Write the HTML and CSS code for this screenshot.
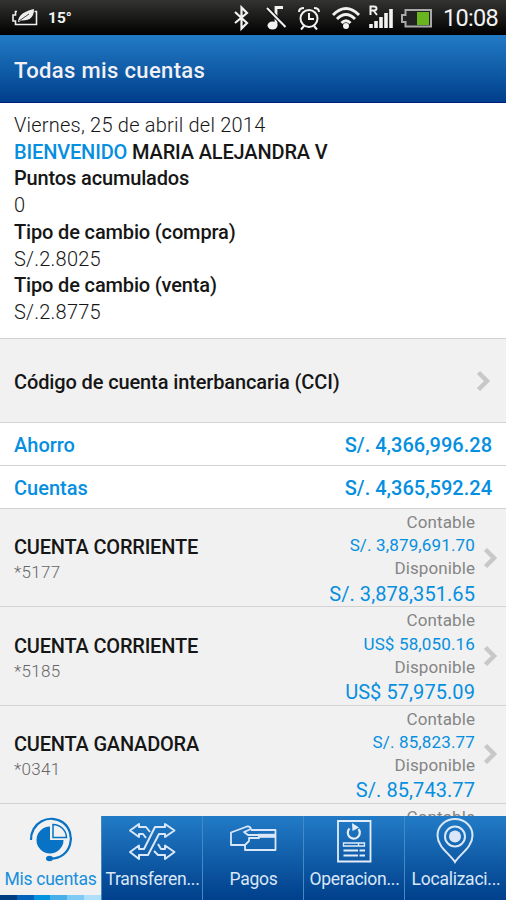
FILE: index.html
```html
<!DOCTYPE html>
<html lang="es">
  <head>
    <meta charset="UTF-8" />
    <meta name="viewport" content="width=device-width, initial-scale=1.0" />
    <title>Todas mis cuentas</title>
    <link rel="stylesheet" href="styles.css">
  </head>
  <body>
    <div class="status-bar">
      <div class="status-left">
        <svg width="26" height="18" viewBox="0 0 26 18">
          <path d="M5 2.500H3.500V6H1V12H3.500V15.500H24.500V2.500H22.500" fill="none" stroke="#eee" stroke-width="1.600" />
          <path d="M6 13C6 5 14 2 22 0C22 8 18 12 9 11.500Q7.500 13 6 13Z" fill="#eee" />
          <path d="M7 12L17 5" stroke="#333" stroke-width="0.900" />
        </svg>
        <span class="temperature">15°</span>
      </div>
      <svg class="status-icons" width="204" height="35" viewBox="0 0 204 35" fill="none" stroke="#f2f2f2">
        <!-- bluetooth -->
        <path d="M2 12L14 23L8.500 28.500V7.500L14 13L2 23" stroke-width="2.200" />
        <!-- silent -->
        <path d="M43 25V7.500H50" stroke-width="2.800" />
        <path d="M34 8L52.500 27" stroke="#111" stroke-width="4" />
        <path d="M34 8L52.500 27" stroke-width="2" />
        <ellipse cx="39.500" cy="25.500" rx="5" ry="4" fill="#f2f2f2" stroke="none" />
        <!-- alarm -->
        <circle cx="76" cy="18.500" r="8.500" stroke-width="2" />
        <path d="M76 13V19H81M66 12Q66 8 71 8M81 8Q86 8 86 12M71 26L68 29.500M81 26L84 29.500" stroke-width="2" />
        <!-- wifi -->
        <path d="M100 15Q113 2 126 15M104 19Q113 10 122 19M108.500 23Q113 18.500 117.500 23" stroke-width="3" />
        <circle cx="113" cy="26" r="3" fill="#f2f2f2" stroke="none" />
        <!-- signal -->
        <path d="M137.500 15V6.500H141Q143.500 6.500 143.500 8.500T141 10.500H138M140.500 10.500L144 15" stroke-width="2" />
        <path d="M138 28V24M143 28V21M148 28V17M153 28V13M158 28V9" stroke-width="3.600" />
        <!-- battery -->
        <path d="M172.500 10H198V26.500H172.500V22H169V15H172.500Z" fill="#222" stroke="#a9a9a9" stroke-width="2" />
        <rect x="184" y="12" width="12" height="13" fill="#68b51e" stroke="none" />
      </svg>
      <span class="clock">10:08</span>
    </div>

    <header class="title-bar">Todas mis cuentas</header>

    <main class="content">
      <section class="summary">
        <div class="light">Viernes, 25 de abril del 2014</div>
        <div class="name"><span class="blue">BIENVENIDO</span> MARIA ALEJANDRA V</div>
        <div>Puntos acumulados</div>
        <div class="light">0</div>
        <div>Tipo de cambio (compra)</div>
        <div class="light">S/.2.8025</div>
        <div>Tipo de cambio (venta)</div>
        <div class="light">S/.2.8775</div>
      </section>

      <div class="cci-row">
        <span>Código de cuenta interbancaria (CCI)</span>
        <svg class="arrow" width="16" height="22" viewBox="0 0 16 22"><path d="M2.500 2.500L11 11L2.500 19.500" /></svg>
      </div>

      <div class="total-row"><span>Ahorro</span><span>S/. 4,366,996.28</span></div>
      <div class="total-row"><span>Cuentas</span><span>S/. 4,365,592.24</span></div>

      <div class="account">
        <div class="account-info">
          <div class="account-name">CUENTA CORRIENTE</div>
          <div class="account-number">*5177</div>
        </div>
        <div class="balances">
          <div class="label">Contable</div>
          <div class="amount">S/. 3,879,691.70</div>
          <div class="label">Disponible</div>
          <div class="available">S/. 3,878,351.65</div>
        </div>
        <svg class="arrow" width="16" height="22" viewBox="0 0 16 22"><path d="M2.500 2.500L11 11L2.500 19.500" /></svg>
      </div>
      <div class="account">
        <div class="account-info">
          <div class="account-name">CUENTA CORRIENTE</div>
          <div class="account-number">*5185</div>
        </div>
        <div class="balances">
          <div class="label">Contable</div>
          <div class="amount">US$ 58,050.16</div>
          <div class="label">Disponible</div>
          <div class="available">US$ 57,975.09</div>
        </div>
        <svg class="arrow" width="16" height="22" viewBox="0 0 16 22"><path d="M2.500 2.500L11 11L2.500 19.500" /></svg>
      </div>
      <div class="account">
        <div class="account-info">
          <div class="account-name">CUENTA GANADORA</div>
          <div class="account-number">*0341</div>
        </div>
        <div class="balances">
          <div class="label">Contable</div>
          <div class="amount">S/. 85,823.77</div>
          <div class="label">Disponible</div>
          <div class="available">S/. 85,743.77</div>
        </div>
        <svg class="arrow" width="16" height="22" viewBox="0 0 16 22"><path d="M2.500 2.500L11 11L2.500 19.500" /></svg>
      </div>
      <div class="account">
        <div class="account-info"></div>
        <div class="balances">
          <div class="label">Contable</div>
        </div>
        <svg class="arrow" width="16" height="22" viewBox="0 0 16 22"><path d="M2.500 2.500L11 11L2.500 19.500" /></svg>
      </div>
    </main>

    <nav class="tabs">
      <a class="tab active">
        <svg width="50" height="50" viewBox="0 0 50 50">
          <path d="M24 10.500V24H37.500A13.500 13.500 0 1 1 24 10.500Z" fill="#0873c4" />
          <path d="M27 8.500V21.500H40.500A13.500 13.500 0 0 0 27 8.500Z" fill="none" stroke="#0873c4" stroke-width="1.500" />
          <path d="M5 24A20.300 20.300 0 0 1 37 6.500C51 17 46 43 24 42.500" fill="none" stroke="#0873c4" stroke-width="2.200" />
          <ellipse cx="23.500" cy="42.500" rx="3.500" ry="2.700" fill="#0873c4" />
        </svg>
        <span>Mis cuentas</span>
        <div class="stripe"><i></i><i></i><i></i><i></i><i></i><i></i></div>
      </a>
      <a class="tab">
        <svg width="50" height="50" viewBox="0 0 50 50" fill="none" stroke="#d9e7f8" stroke-width="2" stroke-linejoin="round">
          <path d="M22 16L18 11H11V8L2 14.500L11 21V18H15L18 22" />
          <path d="M26 35L30 39H37V43L46.500 36L37 29.500V33H33L30 28" />
          <path d="M2 36L11 29.500V33H16L27 11H37V8L46.500 14.500L37 21V18H31L20 39H11V43Z" />
        </svg>
        <span>Transferen...</span>
      </a>
      <a class="tab">
        <svg width="50" height="50" viewBox="0 0 50 50" fill="none" stroke="#d9e7f8" stroke-width="1.800" stroke-linejoin="round">
          <path d="M16 29V34H46.500V14H22" />
          <path d="M16 29H2V16.500L18 10.500Q21 10 22 13L15 16L19 19H30V22H20V25L16 29" />
          <path d="M29 19.800H46" stroke-width="4" />
        </svg>
        <span>Pagos</span>
      </a>
      <a class="tab">
        <svg width="50" height="50" viewBox="0 0 50 50" fill="none" stroke="#e3eefa" stroke-width="1.800">
          <path d="M8 5H40.500V45.500H8Z" />
          <path d="M19.500 12.500A6 6 0 1 0 28.500 13" stroke-width="2.200" />
          <path d="M22 7L29 11.500L22.500 15Z" fill="#e3eefa" stroke="none" />
          <path d="M13.500 27H34.500V30H13.500ZM28.500 27V30" stroke-width="1.300" />
          <path d="M13.500 34.500H28M29.500 34.500H35M13.500 39.500H28M29.500 39.500H35" stroke-width="2" />
        </svg>
        <span>Operacion...</span>
      </a>
      <a class="tab">
        <svg width="50" height="50" viewBox="0 0 50 50" fill="none" stroke="#d9e7f8" stroke-width="2">
          <path d="M24 46C19 38 6.500 31 6.500 19.500A17.500 16.500 0 0 1 41.500 19.500C41.500 31 29 38 24 46Z" />
          <circle cx="24" cy="20.500" r="10" />
          <circle cx="24" cy="20.500" r="6" fill="#d9e7f8" stroke="none" />
        </svg>
        <span>Localizaci...</span>
      </a>
    </nav>
  </body>
</html>
```

FILE: styles.css
```css
* {
  box-sizing: border-box;
}
body {
  margin: 0;
  height: 900px;
  display: flex;
  flex-direction: column;
  overflow: hidden;
  font-family: Roboto, "Liberation Sans", sans-serif;
  font-size: 20px;
  font-weight: 500;
  color: #161616;
  background: #f1f1f1;
  white-space: nowrap;
}
.status-bar {
  height: 35px;
  flex: none;
  display: flex;
  align-items: center;
  padding: 0 8px 0 12px;
  background: linear-gradient(#333331, #000);
  color: #f2f2f2;
}
.status-left {
  display: flex;
  align-items: center;
  gap: 10px;
  flex: 1;
}
.temperature {
  font-size: 15.5px;
  font-weight: 700;
}
.status-icons {
  flex: none;
}
.clock {
  width: 61px;
  display: flex;
  justify-content: flex-end;
  font-size: 23.5px;
  font-weight: 400;
  letter-spacing: -0.7px;
}
.title-bar {
  height: 68px;
  flex: none;
  padding-left: 14px;
  line-height: 71px;
  font-size: 22px;
  letter-spacing: 0.35px;
  color: #f1f1f5;
  background: linear-gradient(#227bc6, #003f8b);
  border-bottom: 1px solid #002080;
}
.content {
  flex: 1;
  min-height: 0;
  overflow: hidden;
}
.summary {
  height: 235px;
  padding: 9px 14px 0;
  background: #fff;
  line-height: 26.7px;
  letter-spacing: -0.15px;
}
.light {
  font-weight: 300;
  letter-spacing: 0.22px;
}
.blue {
  color: #058fe0;
}
.cci-row,
.total-row,
.account {
  display: flex;
  align-items: center;
  border-top: 1px solid #d2d2d2;
}
.cci-row {
  height: 84px;
  padding: 2px 14px 0;
  justify-content: space-between;
  letter-spacing: -0.12px;
}
.arrow {
  flex: none;
  fill: none;
  stroke: #c9c7c9;
  stroke-width: 4.5px;
}
.cci-row .arrow {
  margin-top: -2px;
}
.total-row {
  height: 43px;
  padding: 2px 14px 0;
  justify-content: space-between;
  background: #fff;
  color: #058fe0;
}
.account {
  height: 98.4px;
  padding: 0 7px 0 14px;
}
.account-info {
  flex: 1;
  padding-top: 3px;
}
.account-name {
  line-height: 26px;
  letter-spacing: -0.2px;
}
.account-number {
  font-size: 17px;
  line-height: 24px;
  font-weight: 300;
  letter-spacing: 0.3px;
  color: #666;
}
.balances {
  height: 100%;
  padding: 2px 8px 0 0;
  text-align: right;
  font-size: 17px;
  font-weight: 400;
  line-height: 23.2px;
}
.label {
  color: #858585;
  letter-spacing: 0.1px;
}
.amount,
.available {
  color: #058fe0;
  letter-spacing: 0.15px;
}
.available {
  font-size: 20px;
  line-height: 27px;
  letter-spacing: 0.07px;
}
.tabs {
  height: 84px;
  flex: none;
  display: grid;
  grid-template-columns: 101px 101px 101px 101px 102px;
}
.tab {
  position: relative;
  display: flex;
  flex-direction: column;
  align-items: center;
  padding-left: 1px;
  border-left: 1px solid #4389c4;
  background: linear-gradient(#227bc6, #003f8b);
  color: #d9e7f8;
  font-size: 17.5px;
  font-weight: 400;
  line-height: 26px;
  letter-spacing: -0.25px;
}
.tab.active {
  padding-left: 0;
  border-left: none;
  background: #f1f1f1;
  color: #168fdc;
}
.stripe {
  position: absolute;
  left: 0;
  right: 0;
  bottom: 0;
  height: 5px;
  display: flex;
}
.stripe i {
  flex: 1;
  background: #003f7f;
}
.stripe i:nth-child(2) {
  background: #0062b8;
}
.stripe i:nth-child(3) {
  background: #0093e0;
}
.stripe i:nth-child(4) {
  background: #48aee8;
}
.stripe i:nth-child(5) {
  background: #7fcaf5;
}
.stripe i:nth-child(6) {
  background: #b0dffc;
}
```
